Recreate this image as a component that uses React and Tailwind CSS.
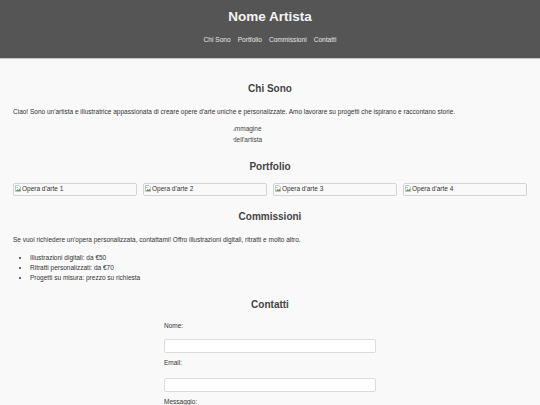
import React from 'react';

const works = ["Opera d'arte 1", "Opera d'arte 2", "Opera d'arte 3", "Opera d'arte 4"];

const prices = [
  'Illustrazioni digitali: da €50',
  'Ritratti personalizzati: da €70',
  'Progetti su misura: prezzo su richiesta',
];

// little "broken image" glyph shown by the browser when a picture is missing
const BrokenImg = () => (
  <svg width="6" height="7" viewBox="0 0 12 14" className="shrink-0">
    <path d="M1 1h7l3 3v9H1z" fill="#fff" stroke="#9a9a9a" strokeWidth="1.2" />
    <path d="M2 12l3-4 2 2 2-3 2 5z" fill="#5a9e4b" />
    <circle cx="4" cy="5" r="1.2" fill="#4a8fd8" />
  </svg>
);

const App = () => {
  return (
    <div className="min-h-screen bg-[#f9f9f9] text-[#333]" style={{ fontFamily: '"Liberation Sans", Arial, sans-serif' }}>
      <header className="h-[59px] bg-[#555] border-b border-[#c4c4c4] flex flex-col items-center pt-[9px]">
        <h1 className="text-[13.5px] leading-[16px] font-bold text-[#f4f4f4]">Nome Artista</h1>
        <nav className="mt-[11px] flex gap-[7px] text-[6.6px] leading-[8px] text-[#e6e6e6]">
          <a href="#chi-sono">Chi Sono</a>
          <a href="#portfolio">Portfolio</a>
          <a href="#commissioni">Commissioni</a>
          <a href="#contatti">Contatti</a>
        </nav>
      </header>

      <main className="px-[13px]">
        <section id="chi-sono" className="pt-[24px]">
          <h2 className="text-center text-[10px] leading-[12px] font-bold text-[#444]">Chi Sono</h2>
          <p className="mt-[12.5px] text-[6.5px] leading-[8px]">
            Ciao! Sono un'artista e illustratrice appassionata di creare opere d'arte uniche e personalizzate. Amo lavorare su progetti che ispirano e raccontano storie.
          </p>
          <div className="mt-[8.5px] flex justify-center">
            <div className="w-[76px] h-[22px] rounded-full overflow-hidden">
              <span className="block w-[38px] pl-[1px] text-[6.5px] leading-[10.5px] text-[#444]">Immagine dell'artista</span>
            </div>
          </div>
        </section>

        <section id="portfolio" className="pt-[14.5px]">
          <h2 className="text-center text-[10px] leading-[12px] font-bold text-[#444]">Portfolio</h2>
          <div className="mt-[10.5px] grid grid-cols-4 gap-[6px]">
            {works.map((w) => (
              <div key={w} className="h-[13px] border border-[#d4d4d4] rounded-[2px] flex items-start gap-[1px] pl-[1px] pt-[1px] text-[6.5px] leading-[8px] text-[#333]">
                <BrokenImg />
                <span>{w}</span>
              </div>
            ))}
          </div>
        </section>

        <section id="commissioni" className="pt-[15px]">
          <h2 className="text-center text-[10px] leading-[12px] font-bold text-[#444]">Commissioni</h2>
          <p className="mt-[12.5px] text-[6.5px] leading-[8px]">
            Se vuoi richiedere un'opera personalizzata, contattami! Offro illustrazioni digitali, ritratti e molto altro.
          </p>
          <ul className="mt-[9px] pl-[17px] list-disc text-[6.5px] leading-[10.2px]">
            {prices.map((p) => (
              <li key={p}>{p}</li>
            ))}
          </ul>
        </section>

        <section id="contatti" className="pt-[16px]">
          <h2 className="text-center text-[10px] leading-[12px] font-bold text-[#444]">Contatti</h2>
          <form className="mx-auto w-[212px] mt-[10.5px] flex flex-col text-[6.5px] leading-[8px]">
            <label htmlFor="nome">Nome:</label>
            <input id="nome" type="text" className="mt-[9.5px] h-[14px] bg-white border border-[#dcdcdc] rounded-[2px]" />
            <label htmlFor="email" className="mt-[6px]">Email:</label>
            <input id="email" type="email" className="mt-[10.5px] h-[14px] bg-white border border-[#dcdcdc] rounded-[2px]" />
            <label htmlFor="msg" className="mt-[6.5px]">Messaggio:</label>
            <textarea id="msg" className="mt-[9.5px] h-[40px] bg-white border border-[#dcdcdc] rounded-[2px]" />
          </form>
        </section>
      </main>
    </div>
  );
};

export default App;
